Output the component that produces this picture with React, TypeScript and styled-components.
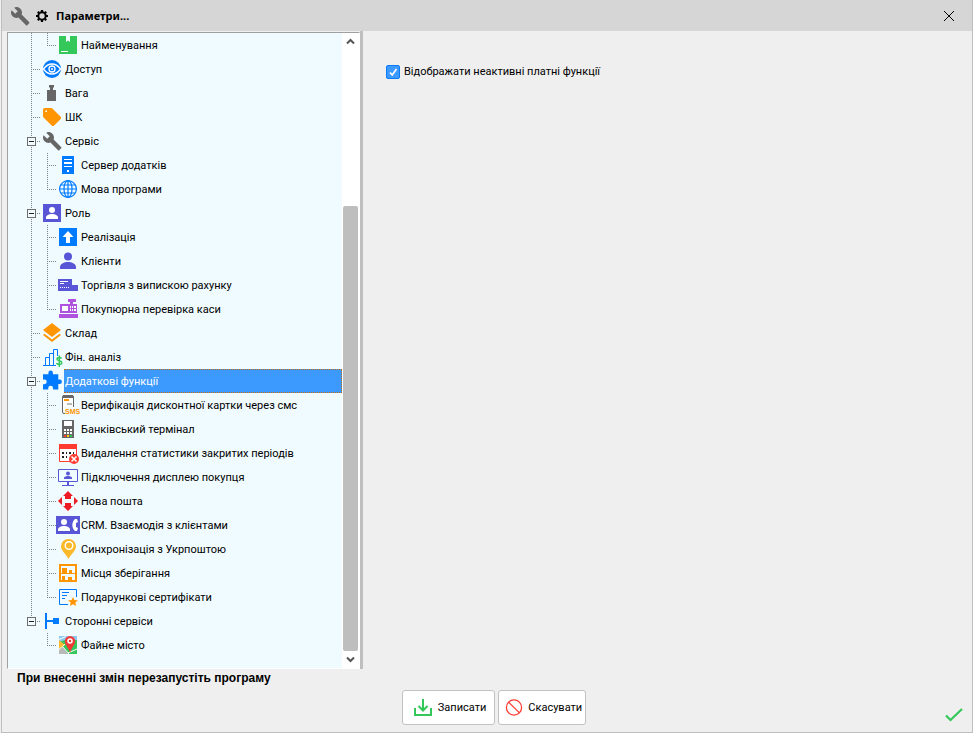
import React, { useState } from "react";
import styled, { createGlobalStyle, css } from "styled-components";

const color = {
  frame: "#bebebe",
  title: "#d6d6d6",
  body: "#efefef",
  tree: "#f0fbff",
  treeEdge: "#a0a0a0",
  select: "#3c9aff",
  guide: "#7d8285",
  blue: "#007aff",
  indigo: "#5856d6",
  purple: "#af52de",
  orange: "#ff9500",
  green: "#34c759",
  red: "#ff3b30",
  gray: "#666666",
};

const GlobalStyle = createGlobalStyle`
  *, *::before, *::after { box-sizing: border-box; }
  body {
    margin: 0;
    background: ${color.body};
    color: #000;
    font: 11px/16px Roboto, "Liberation Sans", sans-serif;
  }
  button, input { font: inherit; color: inherit; }
`;

const Window = styled.div`
  display: flex;
  flex-direction: column;
  min-height: 100vh;
  margin-left: 1px;
  border: 1px solid ${color.frame};
  border-top: 0;
  background: ${color.body};
`;

const TitleBar = styled.header`
  display: flex;
  align-items: center;
  height: 31px;
  padding: 0 11px 0 6px;
  background: ${color.title};
`;

const TitleIcons = styled.div`
  display: flex;
  width: 48px;
  gap: 0;
  & > :first-child {
    margin-right: -2px;
  }
`;

const Title = styled.h1`
  flex: 1;
  margin: 0;
  font: bold 11px/16px "Noto Sans", sans-serif;
`;

const PlainButton = styled.button`
  display: flex;
  padding: 0;
  border: 0;
  background: none;
  cursor: pointer;
`;

const Main = styled.main`
  display: grid;
  grid-template-columns: minmax(280px, 361px) 1fr;
  flex: 1;
`;

const Sidebar = styled.aside`
  display: flex;
  padding: 1px 0 0 5px;
  border-right: 3px solid ${color.frame};
`;

const TreeFrame = styled.div`
  display: flex;
  flex: 1;
  border: 1px solid ${color.treeEdge};
  border-right-color: #fff;
  border-bottom-color: #fff;
  background: ${color.tree};
`;

const Tree = styled.ul`
  flex: 1;
  min-width: 0;
  margin: 0;
  padding: 0 0 11px;
  list-style: none;
`;

const Row = styled.li`
  display: flex;
  height: 24px;
`;

type Line = "full" | "upper" | "none";

const lineHeight = { full: "24px", upper: "12px", none: "0" };

const Guide = styled.span<{ $line: Line; $branch: boolean; $child?: boolean }>`
  display: flex;
  flex: none;
  align-items: center;
  width: ${(p) => (p.$child ? 16 : 32)}px;
  padding-left: ${(p) => (p.$child ? 0 : 19)}px;
  background-image: repeating-linear-gradient(
      to bottom,
      ${color.guide} 0 1px,
      transparent 1px 2px
    ),
    repeating-linear-gradient(
      to right,
      ${color.guide} 0 1px,
      transparent 1px 2px
    );
  background-repeat: no-repeat;
  background-position: ${(p) => (p.$child ? 7 : 23)}px 0,
    ${(p) => (p.$child ? 7 : 23)}px 12px;
  background-size: 1px ${(p) => lineHeight[p.$line]},
    ${(p) => (p.$branch ? 9 : 0)}px 1px;
`;

const Expander = styled.button`
  display: grid;
  place-items: center;
  width: 9px;
  height: 9px;
  padding: 0;
  border: 1px solid #6e6e6e;
  background: ${color.tree};
  cursor: pointer;
`;

const RowLabel = styled.button<{ $selected: boolean }>`
  flex: 1;
  min-width: 0;
  padding: 2px 1px 0;
  border: 1px dotted transparent;
  border-left-width: 0;
  background: none;
  text-align: left;
  white-space: nowrap;
  overflow: hidden;
  cursor: pointer;
  ${(p) =>
    p.$selected &&
    css`
      border-color: #c06a14;
      background: ${color.select};
      color: #fff;
    `}
`;

const ScrollBar = styled.div`
  display: flex;
  flex: none;
  flex-direction: column;
  width: 17px;
  background: #fff;
`;

const ScrollButton = styled(PlainButton)`
  flex: none;
  justify-content: center;
  align-items: center;
  height: 17px;
`;

const ScrollTrack = styled.div`
  display: flex;
  flex: 1;
  align-items: flex-end;
  padding: 0 1px;
`;

const ScrollThumb = styled.div`
  flex: 1;
  height: 74%;
  border-radius: 2px;
  background: ${color.frame};
`;

const Panel = styled.section`
  padding: 33px 23px;
`;

const CheckLabel = styled.label`
  display: flex;
  align-items: center;
  gap: 4px;
`;

const CheckBox = styled.input`
  appearance: none;
  width: 14px;
  height: 14px;
  margin: 0;
  border: 1px solid #0a7aff;
  border-radius: 2px;
  background: #fff;
  &:checked {
    background: ${color.select}
      url("data:image/svg+xml,%3Csvg xmlns='http://www.w3.org/2000/svg' viewBox='0 0 12 12'%3E%3Cpath d='M3 6.5l2.200 2.500L9.500 3' fill='none' stroke='white' stroke-width='1.600'/%3E%3C/svg%3E");
  }
`;

const Footer = styled.footer`
  display: grid;
  grid-template-columns: 1fr auto 1fr;
  padding: 1px 0 7px 14px;
`;

const Note = styled.p`
  grid-column: 1 / -1;
  margin: 0;
  height: 20px;
  padding-left: 1px;
  font: bold 12px/16px "Liberation Sans", sans-serif;
`;

const Actions = styled.div`
  display: flex;
  grid-column: 2;
  gap: 3px;
`;

const ActionButton = styled.button<{ $wide?: boolean }>`
  display: flex;
  align-items: center;
  gap: ${(p) => (p.$wide ? 3 : 2)}px;
  height: 35px;
  padding: 1px ${(p) => (p.$wide ? 8 : 3)}px 0;
  border: 1px solid #c2c2c2;
  border-radius: 3px;
  background: #fff;
  cursor: pointer;
`;

const Confirm = styled(PlainButton)`
  grid-column: 3;
  justify-self: end;
  align-self: end;
  margin-right: 6px;
`;

const IconBox = styled.svg`
  display: block;
  flex: none;
  width: 24px;
  height: 24px;
`;

const wrench =
  "M22.7 19l-9.100-9.100c.9-2.300.4-5-1.500-6.900-2-2-5-2.400-7.400-1.300L9 6 6 9 1.600 4.700C.4 7.100.9 10.100 2.900 12.100c1.900 1.900 4.600 2.400 6.900 1.500l9.100 9.100c.4.4 1 .4 1.400 0l2.300-2.300c.5-.4.5-1.100.1-1.400z";

const art = {
  product: (
    <>
      <path fill={color.green} d="M3 3h7v6l2-1.500L14 9V3h7v18H3z" />
      <path stroke="#fff" d="M5 18.500h7" />
    </>
  ),
  eye: (
    <>
      <circle cx="12" cy="12" r="9" fill={color.blue} />
      <g fill="none" stroke="#fff" strokeWidth="1.300">
        <path d="M3.500 12C6 8.500 9 7 12 7s6 1.500 8.500 5C18 15.500 15 17 12 17s-6-1.500-8.500-5z" />
        <circle cx="12" cy="12" r="3" />
      </g>
      <circle cx="12" cy="12" r="1" fill="#fff" />
    </>
  ),
  weight: (
    <path fill={color.gray} d="M9 4h5v2l-1 1v2h3v11H7V9h3V7L9 6z" />
  ),
  tag: (
    <g transform="translate(1.200 1.200) scale(.9)">
      <path
        fill={color.orange}
        d="M21.410 11.580l-9-9C12.050 2.220 11.550 2 11 2H4c-1.100 0-2 .9-2 2v7c0 .55.22 1.050.59 1.420l9 9c.36.36.86.58 1.410.58s1.050-.22 1.410-.59l7-7c.37-.36.59-.86.59-1.410s-.23-1.060-.59-1.420zM5.500 6.500a1 1 0 1 1 0-2 1 1 0 0 1 0 2z"
      />
    </g>
  ),
  wrench: (
    <g transform="translate(2.200 2.200) scale(.84)">
      <path fill={color.gray} d={wrench} />
    </g>
  ),
  server: (
    <>
      <path fill={color.blue} d="M6 3h12v18H6z" />
      <path fill="#fff" d="M8 6h8v1H8zM8 9h8v2H8zM8 13h8v1H8zM11 17h2v2h-2z" />
    </>
  ),
  globe: (
    <g fill="none" stroke={color.blue} strokeWidth="1.200">
      <circle cx="12" cy="12" r="8.400" />
      <ellipse cx="12" cy="12" rx="4" ry="8.400" />
      <path d="M12 3.500v17M3.500 12h17M4.500 8h15M4.500 16h15" />
    </g>
  ),
  role: (
    <>
      <path fill={color.indigo} d="M3 3h18v18H3z" />
      <circle cx="12" cy="9" r="3" fill="#fff" />
      <path fill="#fff" d="M6 18v-1.500c0-2 3-3.500 6-3.500s6 1.500 6 3.500V18z" />
    </>
  ),
  upload: (
    <>
      <path fill={color.blue} d="M3 3h18v18H3z" />
      <path fill="#fff" d="M12 6l5.500 6H14v6h-4v-6H6.500z" />
    </>
  ),
  person: (
    <g fill={color.indigo}>
      <circle cx="12" cy="7.500" r="4" />
      <path d="M4 20v-2c0-3 4-5 8-5s8 2 8 5v2z" />
    </g>
  ),
  invoice: (
    <>
      <path fill={color.indigo} d="M2 6h14v6h6v6H2z" />
      <path stroke="#fff" d="M4 8.500h8M4 10.500h4" />
      <path stroke="#fff" strokeDasharray="1 1" d="M4 14.500h10" />
    </>
  ),
  register: (
    <>
      <path
        fill={color.purple}
        d="M12 2h8v3h-3v2h4v9H4V7h10V5h-2zM3 17h19v4H3z"
      />
      <path
        fill="#fff"
        d="M6 9h6v5H6zM14 9h1v2h-1zM16 9h1v2h-1zM18 9h2v2h-2zM14 12h1v2h-1zM16 12h1v2h-1zM18 12h2v2h-2z"
      />
    </>
  ),
  layers: (
    <path
      fill={color.orange}
      d="M12 18.500l-7.400-5.700L3 14.100l9 7 9-7-1.600-1.300zM12 16l7.400-5.700L21 9l-9-7-9 7 1.600 1.300z"
    />
  ),
  analysis: (
    <>
      <path
        fill="none"
        stroke={color.blue}
        d="M3 20.500h13M5.500 20.500v-8h4v8M9.500 14v-5.500h4v12M13.500 9V4.500h4V11"
      />
      <path
        fill="none"
        stroke={color.green}
        strokeWidth="1.500"
        d="M21.500 13.500c-.5-1.200-4.500-1.500-4.500.7 0 2 4.800 1.200 4.800 3.500 0 2.500-4.800 2-5.200.3M19.300 10.500v11.500"
      />
    </>
  ),
  puzzle: (
    <g transform="translate(1.200 .7) scale(.9)">
      <path
        fill={color.blue}
        d="M20.500 11H19V5h-6V3.500a2.500 2.500 0 0 0-5 0V5H2v5.800h1.500a2.700 2.700 0 0 1 0 5.400H2V22h5.800v-1.500a2.700 2.700 0 0 1 5.400 0V22H19v-6h1.500a2.500 2.500 0 0 0 0-5z"
      />
    </g>
  ),
  sms: (
    <>
      <rect x="6.500" y="2.500" width="11" height="18" rx="1.500" fill="#fff" stroke={color.gray} />
      <path fill={color.gray} d="M7 2h10v3H7z" />
      <path fill={color.orange} d="M8 6h5v2H8z" />
      <path fill="#bbb" d="M11 10h5v2h-5z" />
      <path fill={color.tree} d="M9 14h15v8H9z" />
      <text
        x="9"
        y="21"
        fill={color.orange}
        fontFamily="Liberation Sans, sans-serif"
        fontSize="7"
        fontWeight="bold"
      >
        SMS
      </text>
    </>
  ),
  terminal: (
    <>
      <path fill={color.gray} d="M6 3h12v18H6z" />
      <path
        fill="#fff"
        d="M8 4h8v5H8zM8 12h2v2H8zM11 12h2v2h-2zM14 12h2v2h-2zM8 15h2v2H8zM11 15h2v2h-2zM14 15h2v2h-2z"
      />
      <path fill={color.red} d="M8 18h2v2H8z" />
      <path fill="#ffcc00" d="M11 18h2v2h-2z" />
      <path fill={color.green} d="M14 18h2v2h-2z" />
    </>
  ),
  calendar: (
    <>
      <path fill="#fff" stroke={color.red} d="M3.500 3.500h17v17h-17z" />
      <path fill={color.red} d="M3 3h18v5H3z" />
      <path
        fill="#222"
        d="M6 11h2v2H6zM10 11h1v2h-1zM13 11h2v2h-2zM17 11h1v2h-1zM6 15h2v2H6zM10 15h1v2h-1z"
      />
      <circle cx="18" cy="18" r="5" fill={color.red} />
      <path stroke="#fff" strokeWidth="1.500" d="M15.500 15.500l5 5M20.500 15.500l-5 5" />
    </>
  ),
  display: (
    <>
      <path fill="none" stroke={color.indigo} d="M2.500 4.500h19v12h-19zM6 20.500h12" />
      <path fill={color.indigo} d="M11 16h2v5h-2zM8 14v-1.500c2-2 6-2 8 0V14z" />
      <circle cx="12" cy="8.500" r="2" fill={color.indigo} />
    </>
  ),
  post: (
    <path
      fill="#ed1c24"
      d="M12 2l5 5h-2v3H9V7H7zM12 22l-5-5h2v-3h6v3h2zM2 12l4-4v8zM22 12l-4-4v8z"
    />
  ),
  crm: (
    <>
      <path fill={color.indigo} d="M0 3h24v18H0z" />
      <circle cx="8" cy="9" r="3" fill="#fff" />
      <path fill="#fff" d="M2 18v-1.500C2 14.500 5 13 8 13s6 1.500 6 3.500V18z" />
      <path
        fill="#fff"
        d="M19 6h2l1 3-2 1v4l2 1-1 3h-2c-3.500-3-3.500-9 0-12z"
      />
    </>
  ),
  pin: (
    <>
      <path
        fill="#fbb829"
        d="M12.500 2a7.300 7.300 0 0 0-7.500 7.300C5 14 10 17 12.500 22 15 17 20 14 20 9.300A7.300 7.300 0 0 0 12.500 2z"
      />
      <circle cx="13" cy="8.500" r="3.800" fill="none" stroke="#fff" strokeWidth="1.400" />
    </>
  ),
  storage: (
    <>
      <path
        fill="none"
        stroke={color.orange}
        strokeWidth="2"
        d="M4 4h16v16H4z"
      />
      <path
        fill={color.orange}
        d="M4 12h16v1H4zM6 7h5v5H6zM13 9h3v3h-3zM6 15h3v4H6zM12 16h4v3h-4z"
      />
    </>
  ),
  certificate: (
    <>
      <path
        fill="none"
        stroke={color.blue}
        d="M12 19.500H3.500v-15h17V12M6 7.500h7M6 10.500h5M6 13.500h3"
      />
      <path
        fill={color.orange}
        d="M17 12l1.400 3.100 3.600.3-2.700 2.200.8 3.400-3.100-1.800-3.100 1.800.8-3.400-2.700-2.200 3.600-.3z"
      />
    </>
  ),
  external: (
    <path fill={color.blue} d="M5 4h2v7h6V9h6v6h-6v-2H7v7H5z" />
  ),
  map: (
    <>
      <path fill={color.green} d="M3 3h18v18H3z" />
      <path fill="#8cc8f0" d="M3 3h18v4H9L3 9z" />
      <path fill="#ffb92e" d="M3 7l6 5-6 5z" />
      <path fill="#b9b9b9" d="M3 16l4-2 5 7H3z" />
      <path stroke="#fff" d="M3 6.500l7-3M3 16.500L9 11M7 14l6 7M12 20l9-4" />
      <path
        fill="#f23a35"
        d="M14 3a5.200 5.200 0 0 0-5.200 5.200C8.800 12 12.500 14 14 20c1.500-6 5.200-8 5.200-11.800A5.200 5.200 0 0 0 14 3z"
      />
      <circle cx="14" cy="8" r="2" fill="none" stroke="#fff" strokeWidth="1.500" />
    </>
  ),
  gear: (
    <g fill="none" stroke="#000">
      <circle cx="12" cy="12" r="3.700" strokeWidth="2" />
      <path
        strokeWidth="2.200"
        d="M12 6v2M12 16v2M6 12h2M16 12h2M7.800 7.800l1.300 1.300M14.900 14.900l1.300 1.300M16.200 7.800l-1.300 1.300M9.100 14.900l-1.300 1.300"
      />
    </g>
  ),
  close: <path stroke="#000" d="M7 7l10 10M17 7L7 17" />,
  save: (
    <g fill="none" stroke={color.green} strokeWidth="2">
      <path d="M4 12v7h16v-7M12 3v11M7.500 10l4.500 4.500 4.500-4.500" />
    </g>
  ),
  cancel: (
    <g fill="none" stroke={color.red} strokeWidth="1.300">
      <circle cx="12" cy="11.500" r="7.600" />
      <path d="M6.600 6.100l10.800 10.800" />
    </g>
  ),
  check: (
    <path
      fill="none"
      stroke={color.green}
      strokeWidth="2.200"
      d="M4 14.500l4.500 4.500L20 8"
    />
  ),
};

type IconName = keyof typeof art;

const Icon = ({ name }: { name: IconName }) => (
  <IconBox viewBox="0 0 24 24" aria-hidden="true">
    {art[name]}
  </IconBox>
);

interface Item {
  icon: IconName;
  text: string;
  children?: Item[];
}

const earlier: Item = { icon: "product", text: "Найменування" };

const items: Item[] = [
  { icon: "eye", text: "Доступ" },
  { icon: "weight", text: "Вага" },
  { icon: "tag", text: "ШК" },
  {
    icon: "wrench",
    text: "Сервіс",
    children: [
      { icon: "server", text: "Сервер додатків" },
      { icon: "globe", text: "Мова програми" },
    ],
  },
  {
    icon: "role",
    text: "Роль",
    children: [
      { icon: "upload", text: "Реалізація" },
      { icon: "person", text: "Клієнти" },
      { icon: "invoice", text: "Торгівля з випискою рахунку" },
      { icon: "register", text: "Покупюрна перевірка каси" },
    ],
  },
  { icon: "layers", text: "Склад" },
  { icon: "analysis", text: "Фін. аналіз" },
  {
    icon: "puzzle",
    text: "Додаткові функції",
    children: [
      { icon: "sms", text: "Верифікація дисконтної картки через смс" },
      { icon: "terminal", text: "Банківський термінал" },
      { icon: "calendar", text: "Видалення статистики закритих періодів" },
      { icon: "display", text: "Підключення дисплею покупця" },
      { icon: "post", text: "Нова пошта" },
      { icon: "crm", text: "CRM. Взаємодія з клієнтами" },
      { icon: "pin", text: "Синхронізація з Укрпоштою" },
      { icon: "storage", text: "Місця зберігання" },
      { icon: "certificate", text: "Подарункові сертифікати" },
    ],
  },
  {
    icon: "external",
    text: "Сторонні сервіси",
    children: [{ icon: "map", text: "Файне місто" }],
  },
];

interface RowProps {
  item: Item;
  rootLine: Line;
  childLine?: Line;
  open?: boolean;
  selected: boolean;
  onSelect: () => void;
  onToggle?: () => void;
}

const TreeRow = (p: RowProps) => (
  <Row role="treeitem" aria-selected={p.selected} aria-level={p.childLine ? 2 : 1}>
    <Guide $line={p.rootLine} $branch={!p.childLine}>
      {p.item.children && (
        <Expander type="button" aria-label={p.item.text} aria-expanded={p.open} onClick={p.onToggle}>
          <svg width="7" height="7" viewBox="0 0 7 7" aria-hidden="true">
            <path stroke="#222" d={p.open ? "M1 3.500h5" : "M1 3.500h5M3.500 1v5"} />
          </svg>
        </Expander>
      )}
    </Guide>
    {p.childLine && <Guide $line={p.childLine} $branch $child />}
    <Icon name={p.item.icon} />
    <RowLabel type="button" $selected={p.selected} onClick={p.onSelect}>
      {p.item.text}
    </RowLabel>
  </Row>
);

export default function App() {
  const [selected, setSelected] = useState("Додаткові функції");
  const [closed, setClosed] = useState<string[]>([]);
  const [inactive, setInactive] = useState(true);

  const toggle = (text: string) =>
    setClosed((c) => (c.includes(text) ? c.filter((t) => t !== text) : [...c, text]));

  return (
    <Window>
      <GlobalStyle />
      <TitleBar>
        <TitleIcons>
          <Icon name="wrench" />
          <Icon name="gear" />
        </TitleIcons>
        <Title>Параметри...</Title>
        <PlainButton type="button" aria-label="Закрити">
          <Icon name="close" />
        </PlainButton>
      </TitleBar>
      <Main>
        <Sidebar>
          <TreeFrame>
            <Tree role="tree">
              <TreeRow
                item={earlier}
                rootLine="full"
                childLine="upper"
                selected={selected === earlier.text}
                onSelect={() => setSelected(earlier.text)}
              />
              {items.map((item, i) => {
                const last = i === items.length - 1;
                const open = !closed.includes(item.text);
                return (
                  <React.Fragment key={item.text}>
                    <TreeRow
                      item={item}
                      rootLine={last ? "upper" : "full"}
                      open={open}
                      selected={selected === item.text}
                      onSelect={() => setSelected(item.text)}
                      onToggle={() => toggle(item.text)}
                    />
                    {open &&
                      item.children?.map((child, j, all) => (
                        <TreeRow
                          key={child.text}
                          item={child}
                          rootLine={last ? "none" : "full"}
                          childLine={j === all.length - 1 ? "upper" : "full"}
                          selected={selected === child.text}
                          onSelect={() => setSelected(child.text)}
                        />
                      ))}
                  </React.Fragment>
                );
              })}
            </Tree>
            <ScrollBar>
              <ScrollButton type="button" aria-label="Вгору">
                <svg width="11" height="7" viewBox="0 0 11 7" aria-hidden="true">
                  <path fill="none" stroke="#555" strokeWidth="2" d="M2 5.500L5.500 2 9 5.500" />
                </svg>
              </ScrollButton>
              <ScrollTrack>
                <ScrollThumb />
              </ScrollTrack>
              <ScrollButton type="button" aria-label="Вниз">
                <svg width="11" height="7" viewBox="0 0 11 7" aria-hidden="true">
                  <path fill="none" stroke="#555" strokeWidth="2" d="M2 1.500L5.500 5 9 1.500" />
                </svg>
              </ScrollButton>
            </ScrollBar>
          </TreeFrame>
        </Sidebar>
        <Panel>
          <CheckLabel>
            <CheckBox
              type="checkbox"
              checked={inactive}
              onChange={(e) => setInactive(e.target.checked)}
            />
            Відображати неактивні платні функції
          </CheckLabel>
        </Panel>
      </Main>
      <Footer>
        <Note>При внесенні змін перезапустіть програму</Note>
        <Actions>
          <ActionButton type="button" $wide>
            <Icon name="save" />
            Записати
          </ActionButton>
          <ActionButton type="button">
            <Icon name="cancel" />
            Скасувати
          </ActionButton>
        </Actions>
        <Confirm type="button" aria-label="Підтвердити">
          <Icon name="check" />
        </Confirm>
      </Footer>
    </Window>
  );
}
